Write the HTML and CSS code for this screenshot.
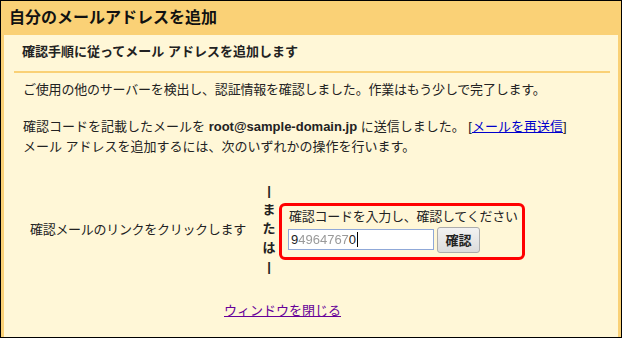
FILE: index.html
```html
<!DOCTYPE html>
<html lang="ja">
<head>
    <meta charset="UTF-8">
    <title>自分のメールアドレスを追加</title>
    <link rel="stylesheet" href="styles.css">
</head>
<body>
    <div class="dialog">
        <div class="dialog-title">自分のメールアドレスを追加</div>
        <div class="dialog-body">
            <div class="step-title">確認手順に従ってメール アドレスを追加します</div>
            <p class="detected">ご使用の他のサーバーを検出し、認証情報を確認しました。作業はもう少しで完了します。</p>
            <p class="sent">
                確認コードを記載したメールを <b>root@sample-domain.jp</b> に送信しました。 [<a href="#" class="resend">メールを再送信</a>]<br>
                メール アドレスを追加するには、次のいずれかの操作を行います。
            </p>

            <div class="choices">
                <div class="choice-link">確認メールのリンクをクリックします</div>
                <div class="or">|<br>ま<br>た<br>は<br>|</div>
                <div class="code-box">
                    <div class="code-label">確認コードを入力し、確認してください</div>
                    <div class="code-row">
                        <div class="code-field">9<span class="blur">4964767</span>0<span class="caret"></span></div>
                        <button type="button" class="verify">確認</button>
                    </div>
                </div>
            </div>

            <p class="close"><a href="#" class="close-link">ウィンドウを閉じる</a></p>
        </div>
    </div>
</body>
</html>
```
FILE: styles.css
```css
body {
    margin: 0;
    font-family: "Liberation Sans", "Noto Sans CJK JP", sans-serif;
    font-size: 13px;
    color: #222;
}

.dialog {
    width: 622px;
    height: 338px;
    box-sizing: border-box;
    border: 1px solid #000;
    display: flex;
    flex-direction: column;
    background-color: #fff7d7;
}

.dialog-title {
    height: 34px;
    line-height: 33px;
    padding-left: 8px;
    background-color: #fad176;
    font-size: 16px;
    font-weight: bold;
    color: #111;
}

.dialog-body {
    flex: 1;
    border-left: 3px solid #fad176;
    border-right: 3px solid #fad176;
    padding: 0 8px 0 10px;
}

.step-title {
    padding: 8px 0 10px 8px;
    line-height: 18px;
    font-weight: bold;
    border-bottom: 2px solid #fad176;
}

p {
    margin: 0;
}

.detected {
    margin-top: 8px;
    padding-left: 9px;
    line-height: 18px;
    letter-spacing: -0.2px;
}

.sent {
    margin-top: 18px;
    padding-left: 9px;
    line-height: 20px;
}

.resend {
    color: #0000cc;
}

.choices {
    display: flex;
    align-items: center;
    margin-top: 24px;
}

.choice-link {
    width: 229px;
    padding-left: 16px;
    white-space: nowrap;
    letter-spacing: -0.3px;
}

.or {
    width: 20px;
    text-align: center;
    line-height: 19px;
    font-weight: bold;
}

.code-box {
    width: 246px;
    box-sizing: border-box;
    margin-top: 5px;
    border: 3px solid #ff0000;
    border-radius: 6px;
    padding: 3px 0 4px 6px;
}

.code-label {
    line-height: 16px;
    padding-left: 1px;
    white-space: nowrap;
    letter-spacing: -0.25px;
}

.code-row {
    display: flex;
    align-items: center;
    margin-top: 2px;
}

.code-field {
    width: 146px;
    height: 21px;
    box-sizing: border-box;
    border: 1px solid #8fa8d8;
    background-color: #fff;
    line-height: 19px;
    padding-left: 2px;
    display: flex;
    align-items: center;
}

.blur {
    color: #9a9a9a;
    filter: blur(0.6px);
}

.caret {
    display: inline-block;
    width: 1px;
    height: 15px;
    margin-left: 1px;
    background-color: #000;
}

.verify {
    margin-left: 3px;
    width: 43px;
    height: 26px;
    padding: 0;
    font-family: inherit;
    font-size: 13px;
    font-weight: bold;
    color: #222;
    border: 1px solid #acacac;
    border-radius: 3px;
    background: linear-gradient(#f2f2f2, #dcdcdc);
}

.close {
    margin-top: 26px;
    padding-left: 210px;
    line-height: 18px;
}

.close-link {
    color: #660099;
}
```
